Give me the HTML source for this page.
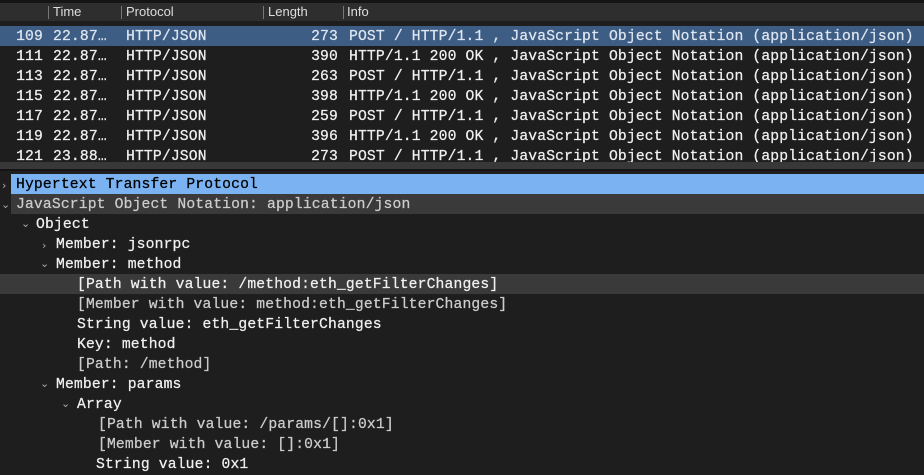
<!DOCTYPE html><html><head><style>
body{margin:0;width:924px;height:463px;overflow:hidden;background:#1e1e1e;font-family:"Liberation Mono",monospace;font-size:14.7px;letter-spacing:0.15px;color:#f0f0f0;position:relative;-webkit-text-stroke:0.25px currentColor}
.a{position:absolute;white-space:pre;line-height:20px}
.hdr{position:absolute;left:0;top:3px;width:924px;height:18px;background:#2e2e2e;font-family:"Liberation Sans",sans-serif;font-size:13px;letter-spacing:0;color:#ddd;-webkit-text-stroke:0}
.hdr span{position:absolute;top:1px}
.sep{position:absolute;top:3px;width:1px;height:13px;background:#777}
.r{position:absolute;left:0;width:924px;height:20px;line-height:20px;white-space:pre}
.r span{position:absolute;top:0}
.no{right:881px}.t{left:53px}.p{left:126px}.l{right:586px}.i{left:349px}
.chev{position:absolute;color:#aaa;font-family:"DejaVu Sans",sans-serif;font-size:11px;-webkit-text-stroke:0}
</style></head><body>
<div style="position:absolute;left:0;top:0;width:924px;height:3px;background:#141414"></div>
<div class="hdr">
<div class="sep" style="left:48px"></div><span style="left:53px">Time</span>
<div class="sep" style="left:121px"></div><span style="left:126px">Protocol</span>
<div class="sep" style="left:263px"></div><span style="left:268px">Length</span>
<div class="sep" style="left:343px"></div><span style="left:347px">Info</span>
</div>
<div style="position:absolute;left:0;top:26px;width:924px;height:20px;background:#3d5d84"></div>
<div class="r" style="top:27px;color:#dde6f2"><span class="no">109</span><span class="t">22.87…</span><span class="p">HTTP/JSON</span><span class="l">273</span><span class="i">POST / HTTP/1.1 , JavaScript Object Notation (application/json)</span></div>
<div class="r" style="top:47px"><span class="no">111</span><span class="t">22.87…</span><span class="p">HTTP/JSON</span><span class="l">390</span><span class="i">HTTP/1.1 200 OK , JavaScript Object Notation (application/json)</span></div>
<div class="r" style="top:67px"><span class="no">113</span><span class="t">22.87…</span><span class="p">HTTP/JSON</span><span class="l">263</span><span class="i">POST / HTTP/1.1 , JavaScript Object Notation (application/json)</span></div>
<div class="r" style="top:87px"><span class="no">115</span><span class="t">22.87…</span><span class="p">HTTP/JSON</span><span class="l">398</span><span class="i">HTTP/1.1 200 OK , JavaScript Object Notation (application/json)</span></div>
<div class="r" style="top:107px"><span class="no">117</span><span class="t">22.87…</span><span class="p">HTTP/JSON</span><span class="l">259</span><span class="i">POST / HTTP/1.1 , JavaScript Object Notation (application/json)</span></div>
<div class="r" style="top:127px"><span class="no">119</span><span class="t">22.87…</span><span class="p">HTTP/JSON</span><span class="l">396</span><span class="i">HTTP/1.1 200 OK , JavaScript Object Notation (application/json)</span></div>
<div class="r" style="top:147px"><span class="no">121</span><span class="t">23.88…</span><span class="p">HTTP/JSON</span><span class="l">273</span><span class="i">POST / HTTP/1.1 , JavaScript Object Notation (application/json)</span></div>
<div style="position:absolute;left:0;top:162px;width:924px;height:7px;background:#383838"></div>
<div style="position:absolute;left:0;top:169px;width:924px;height:2px;background:#141414"></div>
<div style="position:absolute;left:11px;top:174px;width:913px;height:20px;background:#7ab2f2"></div>
<div style="position:absolute;left:11px;top:194px;width:913px;height:20px;background:#3a3a3a"></div>
<div style="position:absolute;left:0;top:274px;width:924px;height:20px;background:#3a3a3a"></div>
<span class="chev" style="left:2px;top:179px">›</span>
<div class="a" style="left:16px;top:175px;color:#000">Hypertext Transfer Protocol</div>
<span class="chev" style="left:1px;top:198px">⌄</span>
<div class="a" style="left:16px;top:195px;color:#ccc">JavaScript Object Notation: application/json</div>
<span class="chev" style="left:21px;top:217px">⌄</span>
<div class="a" style="left:36px;top:215px">Object</div>
<span class="chev" style="left:42px;top:239px">›</span>
<div class="a" style="left:56px;top:235px">Member: jsonrpc</div>
<span class="chev" style="left:40px;top:257px">⌄</span>
<div class="a" style="left:56px;top:255px">Member: method</div>
<div class="a" style="left:77px;top:275px">[Path with value: /method:eth_getFilterChanges]</div>
<div class="a" style="left:77px;top:295px;color:#ccc">[Member with value: method:eth_getFilterChanges]</div>
<div class="a" style="left:77px;top:315px">String value: eth_getFilterChanges</div>
<div class="a" style="left:77px;top:335px">Key: method</div>
<div class="a" style="left:77px;top:355px;color:#ccc">[Path: /method]</div>
<span class="chev" style="left:40px;top:377px">⌄</span>
<div class="a" style="left:56px;top:375px">Member: params</div>
<span class="chev" style="left:61px;top:397px">⌄</span>
<div class="a" style="left:77px;top:395px">Array</div>
<div class="a" style="left:98px;top:415px;color:#ccc">[Path with value: /params/[]:0x1]</div>
<div class="a" style="left:98px;top:435px;color:#ccc">[Member with value: []:0x1]</div>
<div class="a" style="left:96px;top:455px">String value: 0x1</div>
</body></html>
